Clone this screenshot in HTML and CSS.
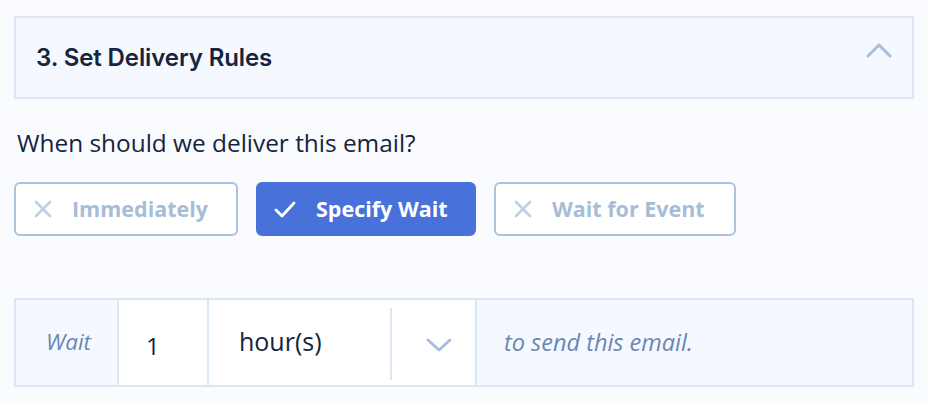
FILE: index.html
```html
<!DOCTYPE html>
<html>
<head>
<meta charset="utf-8">
<link rel="stylesheet" href="styles.css">
</head>
<body>
<div class="panel">
  <div class="header">
    <h2 class="title">3. Set Delivery Rules</h2>
    <svg class="chev-up" width="26" height="16" viewBox="0 0 26 16"><path d="M2 14 L13 3 L24 14" fill="none" stroke="#a6bfdc" stroke-width="3" stroke-linecap="round" stroke-linejoin="round"/></svg>
  </div>
  <p class="question">When should we deliver this email?</p>
  <div class="options">
    <button class="opt opt-a">
      <svg class="ico" width="18" height="18" viewBox="0 0 18 18"><path d="M2 2 L16 16 M16 2 L2 16" stroke="#bccfe6" stroke-width="2.6" stroke-linecap="round"/></svg>
      <span>Immediately</span>
    </button>
    <button class="opt opt-b active">
      <svg class="ico" width="22" height="17" viewBox="0 0 22 17"><path d="M2 9 L8 15 L20 2" fill="none" stroke="#fff" stroke-width="2.8" stroke-linecap="round" stroke-linejoin="round"/></svg>
      <span>Specify Wait</span>
    </button>
    <button class="opt opt-c">
      <svg class="ico" width="18" height="18" viewBox="0 0 18 18"><path d="M2 2 L16 16 M16 2 L2 16" stroke="#bccfe6" stroke-width="2.6" stroke-linecap="round"/></svg>
      <span>Wait for Event</span>
    </button>
  </div>
  <div class="wait-row">
    <div class="cell label">Wait</div>
    <div class="cell num">1</div>
    <div class="cell sel">
      <span class="sel-val">hour(s)</span>
      <span class="sel-div"></span>
      <span class="sel-arrow">
        <svg width="28" height="18" viewBox="0 0 28 18"><path d="M3 4 L14 14 L25 4" fill="none" stroke="#a6bfdc" stroke-width="3" stroke-linecap="round" stroke-linejoin="round"/></svg>
      </span>
    </div>
    <div class="cell tail">to send this email.</div>
  </div>
</div>
</body>
</html>
```

FILE: styles.css
```css
html, body {
  margin: 0;
  padding: 0;
  background: #fafbfe;
}
body {
  font-family: "Open Sans", "Noto Sans", sans-serif;
  color: #15243d;
}
.panel {
  padding: 16px 14px 0 14px;
  width: 900px;
}
.header {
  height: 83px;
  box-sizing: border-box;
  border: 2px solid #dce7f6;
  background: #f5f8ff;
  display: flex;
  align-items: center;
  justify-content: space-between;
  padding: 0 20px 0 20px;
}
.title {
  margin: 0;
  font-family: "Inter", sans-serif;
  font-weight: 600;
  font-size: 24px;
  letter-spacing: -0.1px;
  color: #16253d;
  margin-top: 0;
}
.chev-up {
  margin-top: -16px;
}
.question {
  margin: 28px 0 0 3px;
  font-size: 24.4px;
  line-height: 32px;
  color: #15243d;
}
.options {
  display: flex;
  gap: 18px;
  margin-top: 23px;
}
.opt {
  height: 54px;
  box-sizing: border-box;
  border: 2px solid #a9c2de;
  border-radius: 6px;
  background: #fff;
  display: flex;
  align-items: center;
  padding: 0 0 2px 18px;
  font-family: "Open Sans", sans-serif;
  font-weight: 700;
  font-size: 21.5px;
  color: #a6bdd8;
  cursor: pointer;
}
.opt .ico { flex: none; margin-top: 2px; }
.opt-a { width: 224px; }
.opt-a span, .opt-c span { margin-left: 20px; }
.opt-b { width: 220px; }
.opt-c { width: 242px; }
.opt.active {
  background: #4872da;
  border-color: #4872da;
  color: #fff;
  padding-left: 16px;
}
.opt.active span { margin-left: 20px; }
.wait-row {
  margin-top: 62px;
  height: 89px;
  box-sizing: border-box;
  border: 2px solid #dce7f6;
  display: flex;
}
.cell {
  display: flex;
  align-items: center;
  font-size: 24px;
}
.label {
  width: 103px;
  background: #f5f8ff;
  border-right: 2px solid #dce7f6;
  box-sizing: border-box;
  padding-left: 30px;
  padding-bottom: 2px;
  font-style: italic;
  color: #6a87b3;
  font-size: 22.5px;
}
.num {
  width: 90px;
  background: #fff;
  border-right: 2px solid #dce7f6;
  box-sizing: border-box;
  padding-left: 27px;
  padding-top: 6px;
  color: #15243d;
}
.sel {
  width: 268px;
  background: #fff;
  border-right: 2px solid #dce7f6;
  box-sizing: border-box;
  padding-left: 30px;
  align-items: stretch;
}
.sel-val {
  display: flex;
  align-items: center;
  width: 151px;
  padding-bottom: 4px;
  color: #15243d;
  font-size: 25px;
}
.sel-div {
  width: 2px;
  background: #dce7f6;
  margin: 8px 0 5px 0;
}
.sel-arrow {
  flex: 1;
  display: flex;
  align-items: center;
  justify-content: center;
  padding-top: 4px;
  padding-left: 10px;
}
.tail {
  flex: 1;
  background: #f5f8ff;
  padding-left: 27px;
  padding-bottom: 2px;
  font-style: italic;
  color: #6a87b3;
  font-size: 23.5px;
}
```
